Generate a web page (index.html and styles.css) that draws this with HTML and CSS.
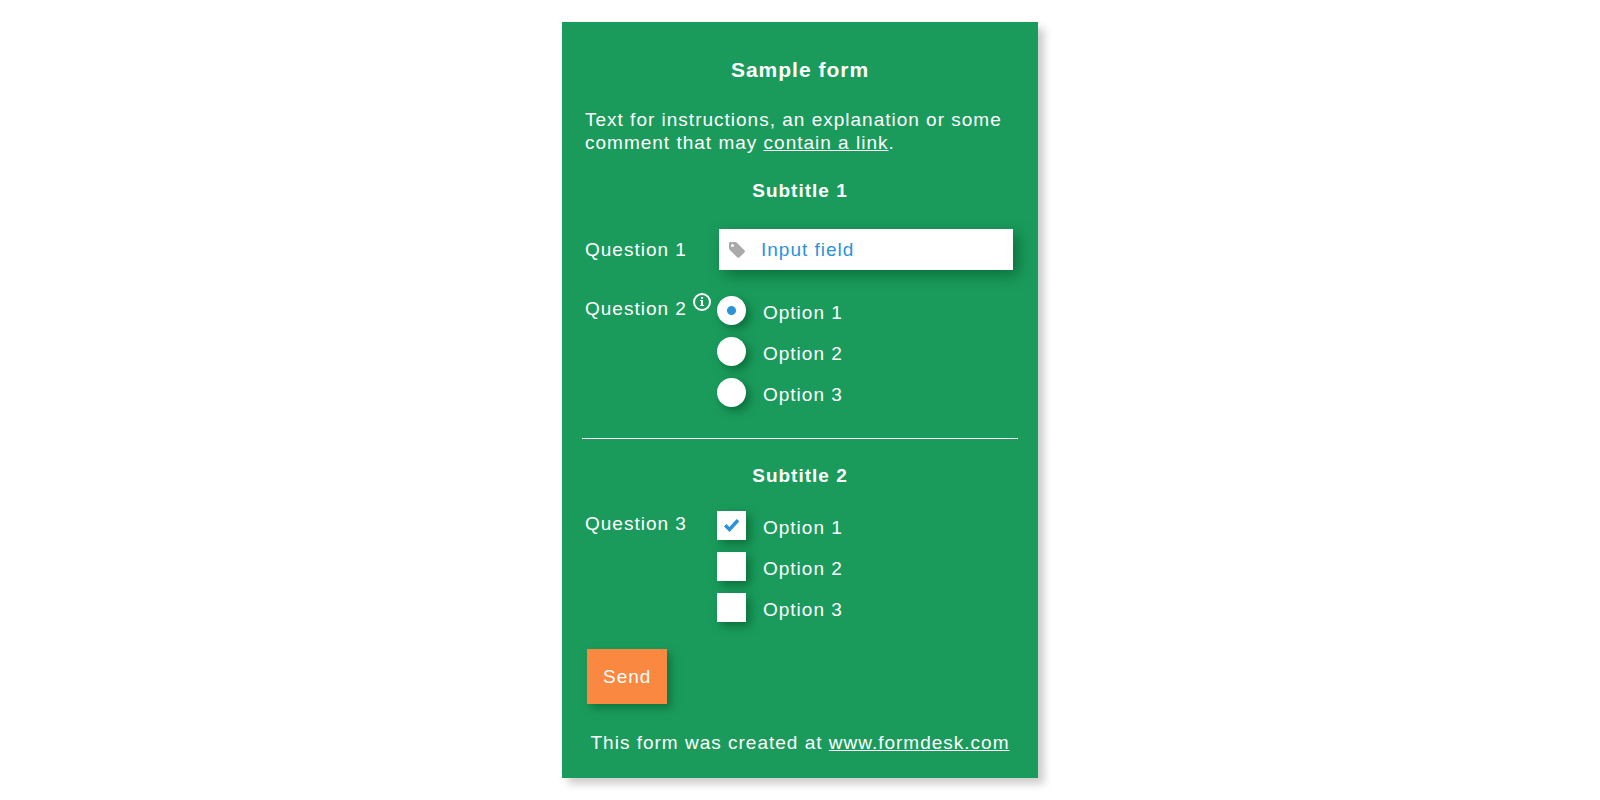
FILE: index.html
```html
<!DOCTYPE html>
<html lang="en">
<head>
<meta charset="UTF-8">
<meta name="viewport" content="width=device-width, initial-scale=1.0">
<title>Sample form</title>
<link rel="stylesheet" href="styles.css">
</head>
<body>
<form class="form-card">
  <h1 class="title">Sample form</h1>
  <p class="intro">Text for instructions, an explanation or some comment that may <a href="#">contain a link</a>.</p>

  <h2 class="subtitle">Subtitle 1</h2>
  <div class="row row-input">
    <label class="question" for="question1">Question 1</label>
    <div class="input-box">
      <svg class="tag-icon" width="16" height="16" viewBox="0 0 16 16" aria-hidden="true">
        <path fill="#aaa" fill-rule="evenodd" d="M1.2 0H6.4Q7.2 0 7.9 .7L15.6 8.4Q16.4 9.3 15.6 10.2L10.3 15.5Q9.4 16.4 8.5 15.5L.8 7.9Q0 7.1 0 6.3V1.2Q0 0 1.2 0ZM3.5 2A1.5 1.5 0 1 0 3.5 5A1.5 1.5 0 1 0 3.5 2Z"/>
      </svg>
      <input type="text" id="question1" name="question1" value="Input field">
    </div>
  </div>
  <div class="row" role="radiogroup" aria-labelledby="question2">
    <div class="question" id="question2">Question 2
      <svg class="info-icon" width="18" height="18" viewBox="0 0 18 18" aria-hidden="true">
        <circle cx="9" cy="9" r="8" fill="none" stroke="#fff" stroke-width="2"/>
        <path fill="#fff" d="M8 4h2v2H8zM7 7h3v5h1v1H7v-1h1V8H7z"/>
      </svg>
    </div>
    <div class="options">
      <label class="option"><input type="radio" name="question2" value="1" checked><span>Option 1</span></label>
      <label class="option"><input type="radio" name="question2" value="2"><span>Option 2</span></label>
      <label class="option"><input type="radio" name="question2" value="3"><span>Option 3</span></label>
    </div>
  </div>

  <hr>

  <h2 class="subtitle">Subtitle 2</h2>
  <div class="row" role="group" aria-labelledby="question3">
    <div class="question" id="question3">Question 3</div>
    <div class="options">
      <label class="option">
        <span class="check">
          <input type="checkbox" name="question3" value="1" checked>
          <svg class="check-mark" width="15" height="13" viewBox="0 0 15 13" aria-hidden="true">
            <path fill="none" stroke="#2a93dc" stroke-width="3.4" d="M1.2 6.3L5.5 10.5L14 1.2"/>
          </svg>
        </span>
        <span>Option 1</span>
      </label>
      <label class="option"><input type="checkbox" name="question3" value="2"><span>Option 2</span></label>
      <label class="option"><input type="checkbox" name="question3" value="3"><span>Option 3</span></label>
    </div>
  </div>

  <button type="submit" class="send">Send</button>
  <p class="footer">This form was created at <a href="#">www.formdesk.com</a></p>
</form>
</body>
</html>
```
FILE: styles.css
```css
* {
  box-sizing: border-box;
}
body {
  margin: 0;
  padding: 22px 16px;
  background-color: #fff;
  color: #fff;
  font-family: "Liberation Sans", Arial, sans-serif;
  font-size: 19px;
  line-height: 23px;
  letter-spacing: 1px;
}
.form-card {
  max-width: 476px;
  margin: 0 auto;
  padding: 36px 20px 24px;
  background-color: #1a9b5c;
  box-shadow: 6px 6px 8px rgba(0, 0, 0, 0.2);
}
a {
  color: #fff;
}
.title, .subtitle, .intro, .footer {
  margin: 0;
  padding: 0 3px;
}
.title {
  margin-bottom: 27px;
  font-size: 21px;
  text-align: center;
}
.intro {
  margin-bottom: 25px;
}
.subtitle {
  margin-bottom: 24px;
  font-size: 19px;
  text-align: center;
}
.row {
  display: grid;
  grid-template-columns: 132px minmax(0, 1fr);
  margin-bottom: 26px;
  padding: 0 3px;
}
.row-input {
  align-items: center;
  padding-top: 3px;
}
.question {
  padding-top: 1px;
}
.row-input .question {
  padding: 0;
}
.info-icon {
  margin-top: -6px;
  vertical-align: 4px;
}

/* text field */
.input-box {
  display: flex;
  align-items: center;
  height: 41px;
  margin: 0 2px;
  padding-left: 10px;
  background-color: #fff;
  box-shadow: 5px 5px 15px rgba(0, 80, 35, 0.6);
}
.tag-icon {
  flex: none;
}
.input-box input {
  flex: 1;
  min-width: 0;
  height: 100%;
  padding: 0 16px;
  border: 0;
  outline: 0;
  background: none;
  color: #2a93dc;
  font: inherit;
  letter-spacing: inherit;
}

/* radio buttons and check boxes */
.options {
  display: flex;
  flex-direction: column;
  gap: 12px;
}
.option {
  display: flex;
  align-items: center;
  gap: 17px;
  height: 29px;
}
.option > span:last-child {
  padding-top: 4px;
}
.option input {
  display: block;
  width: 29px;
  height: 29px;
  margin: 0;
  appearance: none;
  background-color: #fff;
  box-shadow: 4px 4px 10px rgba(0, 80, 35, 0.6);
}
.option input[type="radio"] {
  border-radius: 50%;
}
.option input[type="radio"]:checked {
  background-image: radial-gradient(circle, #2a93dc 4px, #fff 5px);
}
.check {
  position: relative;
}
.check-mark {
  position: absolute;
  top: 8px;
  left: 7px;
  pointer-events: none;
}
.check input:not(:checked) + .check-mark {
  display: none;
}

hr {
  height: 1px;
  margin: 31px 0 25px;
  border: 0;
  background-color: #fff;
}
.send {
  display: block;
  height: 55px;
  margin: 27px 5px;
  padding: 0 16px;
  border: 0;
  background-color: #fb8841;
  box-shadow: 4px 4px 8px rgba(0, 80, 35, 0.5);
  color: #fff;
  font: inherit;
  letter-spacing: inherit;
  cursor: pointer;
}
.footer {
  text-align: center;
}
```
